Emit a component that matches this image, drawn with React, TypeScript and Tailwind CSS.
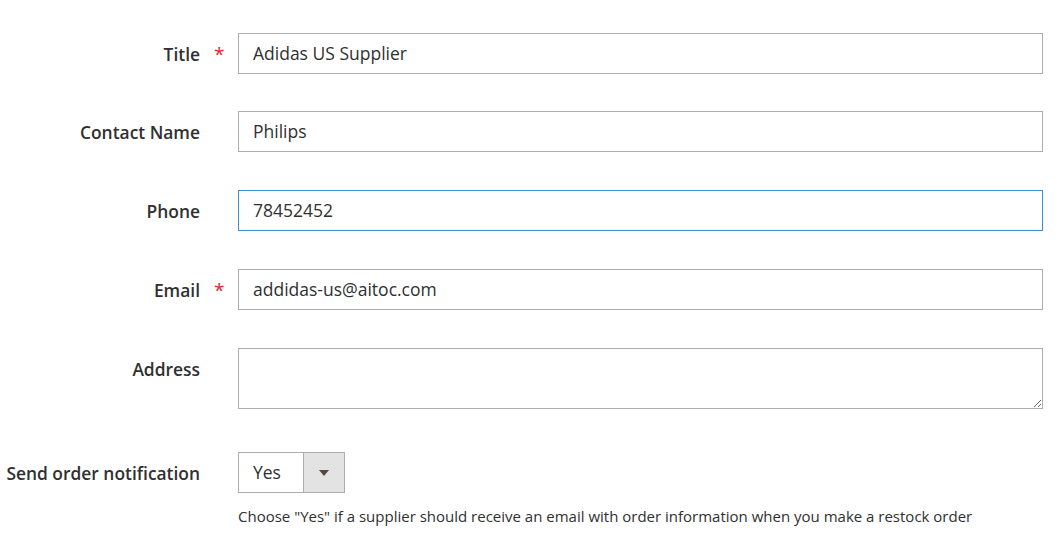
import React from "react";

const font = { fontFamily: '"Open Sans", "Noto Sans", Arial, sans-serif' };

function Row({
  label,
  required,
  children,
  className = "",
}: {
  label: string;
  required?: boolean;
  children: React.ReactNode;
  className?: string;
}) {
  return (
    <div className={"flex items-start " + className}>
      <div className="relative h-[41px] w-[200px] shrink-0 translate-y-px text-right text-[17.4px] font-semibold leading-[41px] text-[#303030]">
        {label}
        {required && (
          <span className="absolute left-[214px] top-0 text-[19px] font-normal text-[#e22626]">*</span>
        )}
      </div>
      <div className="ml-[38px] flex-1">{children}</div>
    </div>
  );
}

function TextInput({ value, focused }: { value: string; focused?: boolean }) {
  return (
    <div
      className={
        "flex h-[41px] items-center border bg-white px-[14px] text-[17.5px] text-[#303030] " +
        (focused ? "border-[#3d8dd5]" : "border-[#adadad]")
      }
    >
      {value}
    </div>
  );
}

export default function App() {
  return (
    <div className="min-h-[543px] w-[1061px] bg-white pt-[33px] pr-[18px]" style={font}>
      <Row label="Title" required>
        <TextInput value="Adidas US Supplier" />
      </Row>
      <Row label="Contact Name" className="mt-[37px]">
        <TextInput value="Philips" />
      </Row>
      <Row label="Phone" className="mt-[38px]">
        <TextInput value="78452452" focused />
      </Row>
      <Row label="Email" required className="mt-[38px]">
        <TextInput value="addidas-us@aitoc.com" />
      </Row>
      <Row label="Address" className="mt-[38px]">
        <textarea
          readOnly
          className="block h-[61px] w-full resize-y border border-[#adadad] bg-white px-[14px] py-[8px] text-[17.5px] text-[#303030] outline-none"
        />
      </Row>
      <Row label="Send order notification" className="mt-[43px]">
        <div className="flex h-[41px] w-[107px] border border-[#adadad] bg-white">
          <div className="flex flex-1 items-center pl-[14px] text-[17.5px] text-[#303030]">Yes</div>
          <div className="flex w-[41px] items-center justify-center border-l border-[#adadad] bg-[#e3e3e3]">
            <svg width="10" height="6" viewBox="0 0 10 6">
              <path d="M0 0 L10 0 L5 6 Z" fill="#514943" />
            </svg>
          </div>
        </div>
        <div className="mt-[13px] text-[15px] leading-[21px] text-[#303030]">
          Choose "Yes" if a supplier should receive an email with order information when you make a restock order
        </div>
      </Row>
    </div>
  );
}
